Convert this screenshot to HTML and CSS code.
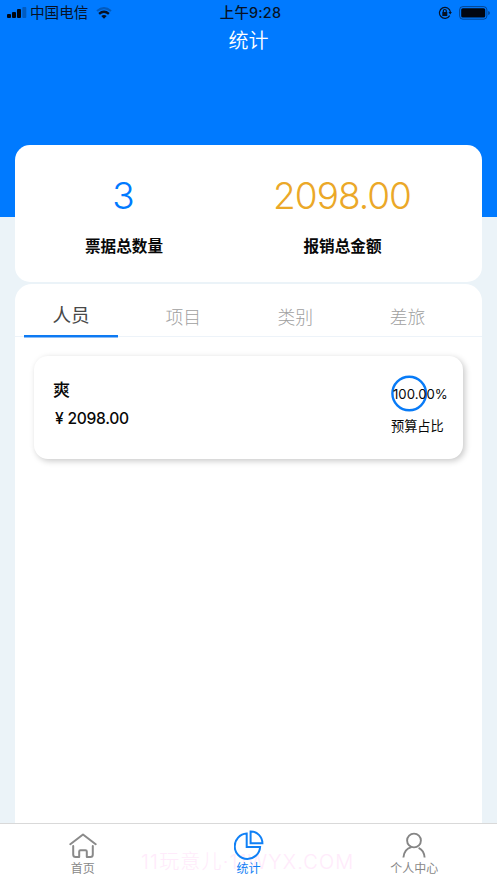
FILE: index.html
```html
<!DOCTYPE html>
<html lang="zh-CN">
<head>
<meta charset="utf-8">
<title>统计</title>
<link rel="stylesheet" href="styles.css">
</head>
<body>
<header class="header">
  <div class="status">
    <div class="status-left">
      <svg class="signal" width="20" height="12" viewBox="0 0 20 12"><rect x="0" y="7" width="4" height="4" rx="1"/><rect x="5" y="5" width="4" height="6" rx="1"/><rect x="10" y="2" width="4" height="9" rx="1"/><rect x="15.3" y="0" width="4" height="11" rx="1" opacity=".27"/></svg>
      <span class="carrier">中国电信</span>
      <svg class="wifi" width="16" height="12" viewBox="0 0 16 12" fill="none" stroke="#071225" stroke-width="2"><path d="M1 4Q8-1.8 15 4" opacity=".3"/><path d="M3.1 6.8Q8 2.6 12.9 6.8" stroke-width="2.4"/><path d="M5.3 9Q8 6.8 10.7 9L8 11.8Z" fill="#071225" stroke="none"/></svg>
    </div>
    <span class="time">上午9:28</span>
    <div class="status-right">
      <svg width="14" height="14" viewBox="0 0 14 14" fill="none" stroke="#071225" stroke-width="1.2"><path d="M11.7 9.6A5.5 5.5 0 1 1 12.4 6"/><path d="M10.5 6h3.4l-1.7 2.6z" fill="#071225" stroke="none"/><rect x="4.3" y="6" width="5" height="4" fill="#071225" stroke="none"/><path d="M5.3 6V5a1.5 1.5 0 0 1 3 0v1"/></svg>
      <svg width="32" height="14" viewBox="0 0 32 14"><rect x=".6" y=".6" width="27.3" height="12.6" rx="3.3" fill="none" stroke="#071225" stroke-opacity=".5"/><rect x="2.2" y="2.2" width="24" height="9.4" rx="1.6" fill="#020711"/><path d="M29.3 5v4q1.5-.5 1.5-2t-1.5-2" fill="#071225" opacity=".6"/></svg>
    </div>
  </div>
  <h1 class="title">统计</h1>
</header>
<main class="main">
  <section class="summary">
    <div class="metric count"><span class="value">3</span><span class="label">票据总数量</span></div>
    <div class="metric amount"><span class="value">2098.00</span><span class="label">报销总金额</span></div>
  </section>
  <section class="panel">
    <nav class="tabs">
      <span class="tab active">人员</span><span class="tab">项目</span><span class="tab">类别</span><span class="tab">差旅</span>
    </nav>
    <article class="item">
      <div class="person"><div class="name">爽</div><div class="money"><span class="yen">¥</span>2098.00</div></div>
      <div class="budget">
        <div class="ring"><svg width="37" height="37" viewBox="0 0 37 37"><circle cx="18.2" cy="18.5" r="16.8" fill="none" stroke="#087bf7" stroke-width="2.4"/></svg><span>100.00%</span></div>
        <div class="budget-label">预算占比</div>
      </div>
    </article>
  </section>
</main>
<footer class="tabbar">
  <div class="watermark">11玩意儿·11WYX.COM</div>
  <div class="nav"><svg width="28" height="26" viewBox="0 0 28 26" fill="none" stroke="#8a8a8a" stroke-width="2" stroke-linejoin="round" stroke-linecap="round"><path d="M1.3 11.2 14 1.5 26.7 11.2"/><path d="M4.2 13v8.5q0 2.5 2.5 2.5h3.5v-5.5q0-1.3 1.3-1.3h5q1.3 0 1.3 1.3V24h3.5q2.5 0 2.5-2.5V13"/></svg><span>首页</span></div>
  <div class="nav current"><svg width="30" height="30" viewBox="0 0 30 30" fill="none" stroke="#1080f5" stroke-width="2"><path d="M12.7 3.6V17h13.4A12.7 12.7 0 1 1 12.7 3.6Z"/><path d="M16.6 1.4v11.8h11.8A11.8 11.8 0 0 0 16.6 1.4Z"/></svg><span>统计</span></div>
  <div class="nav"><svg width="26" height="27" viewBox="0 0 26 27" fill="none" stroke="#858585" stroke-width="1.9"><circle cx="13" cy="8.5" r="6.9"/><path d="M2.4 25.5q.7-8.5 8-10.4M17.6 15.8Q23.1 18.3 23.6 25.5"/></svg><span>个人中心</span></div>
</footer>
</body>
</html>
```
FILE: styles.css
```css
* { box-sizing: border-box; }
body {
  margin: 0;
  width: 497px;
  height: 883px;
  overflow: hidden;
  display: flex;
  flex-direction: column;
  background: #ebf3f8;
  color: #080808;
  font-family: Inter, "Noto Sans CJK SC", sans-serif;
}
.header { height: 217px; flex: none; background: #007aff; }
.status {
  height: 25px;
  display: grid;
  grid-template-columns: 1fr auto 1fr;
  align-items: center;
  padding: 0 6px 0 7px;
  color: #071225;
}
.status-left, .status-right { display: flex; align-items: center; }
.status-right { justify-content: flex-end; gap: 7px; }
.signal { fill: #020711; }
.carrier { margin: 0 8px 0 3px; font-size: 14.6px; line-height: 24px; }
.time { padding-left: 3px; font-size: 14.4px; font-weight: 500; line-height: 24px; letter-spacing: .2px; }
.title {
  margin: 0;
  padding-top: 1px;
  text-align: center;
  color: #fff;
  font-size: 20px;
  line-height: 30px;
  font-weight: 350;
}
.main {
  flex: 1;
  display: flex;
  flex-direction: column;
  gap: 2px;
  margin: -72px 15px 0;
  min-height: 0;
}
.summary {
  height: 137px;
  flex: none;
  display: flex;
  border-radius: 15px;
  background: #fff;
}
.metric { display: flex; flex-direction: column; align-items: center; padding-top: 26px; }
.count { width: 218px; }
.amount { width: 219px; }
.value {
  height: 50px;
  line-height: 50px;
  font-size: 37px;
  font-weight: 300;
  letter-spacing: -1px;
}
.count .value { margin-left: -2px; color: #007aff; }
.amount .value { margin-left: -1px; color: #eba828; }
.label { margin-top: 13px; font-size: 15.6px; line-height: 26px; font-weight: 700; }
.panel { flex: 1; background: #fff; border-radius: 17px 17px 0 0; }
.tabs { display: flex; height: 53px; padding: 0 9px; border-bottom: 1px solid #edf3f9; }
.tab {
  width: 94px;
  height: 54px;
  margin-right: 18.2px;
  flex: none;
  padding-top: 9px;
  text-align: center;
  line-height: 50px;
  font-size: 17.8px;
  font-weight: 300;
  color: #a0a0a0;
}
.tab.active {
  height: 53px;
  padding-top: 6px;
  border-bottom: 2px solid #0d7af3;
  box-shadow: 0 1px 0 #8bbdf7;
  font-size: 18.6px;
  font-weight: 400;
  color: #484848;
}
.tab:last-child { margin-right: 0; }
.item {
  height: 103px;
  margin: 19px 19px 0;
  padding: 20px 16px 0 19px;
  display: flex;
  justify-content: space-between;
  border-radius: 14px;
  background: #fff;
  box-shadow: 2px 2px 6px rgba(0, 0, 0, .22);
}
.name { font-size: 17px; line-height: 28px; font-weight: 500; }
.money { display: flex; padding-left: 2px; font-size: 15.6px; line-height: 29px; font-weight: 500; letter-spacing: -.3px; }
.yen { width: 12.5px; }
.budget { width: 56px; margin-top: -1px; }
.ring {
  width: 37px;
  height: 37px;
  display: grid;
  align-items: center;
  font-size: 13.2px;
  white-space: nowrap;
}
.ring > * { grid-area: 1 / 1; }
.ring span { padding-left: 2px; }
.budget-label { margin-top: 3px; font-size: 13.2px; line-height: 22px; }
.tabbar {
  position: relative;
  height: 60px;
  flex: none;
  display: flex;
  border-top: 1px solid #d9d9d9;
  background: #fff;
}
.nav {
  position: relative;
  flex: 1;
  display: flex;
  flex-direction: column;
  align-items: center;
  justify-content: flex-end;
  color: #888;
  font-size: 12px;
  line-height: 18px;
  padding-bottom: 5px;
}
.nav svg { margin-bottom: 1px; }
.nav.current { color: #1080f5; }
.nav.current svg { margin-bottom: 0; }
.watermark {
  position: absolute;
  left: 141px;
  top: 23px;
  font-size: 20px;
  line-height: 30px;
  font-weight: 300;
  letter-spacing: 1.2px;
  white-space: nowrap;
  color: #ffebfb;
}
```
